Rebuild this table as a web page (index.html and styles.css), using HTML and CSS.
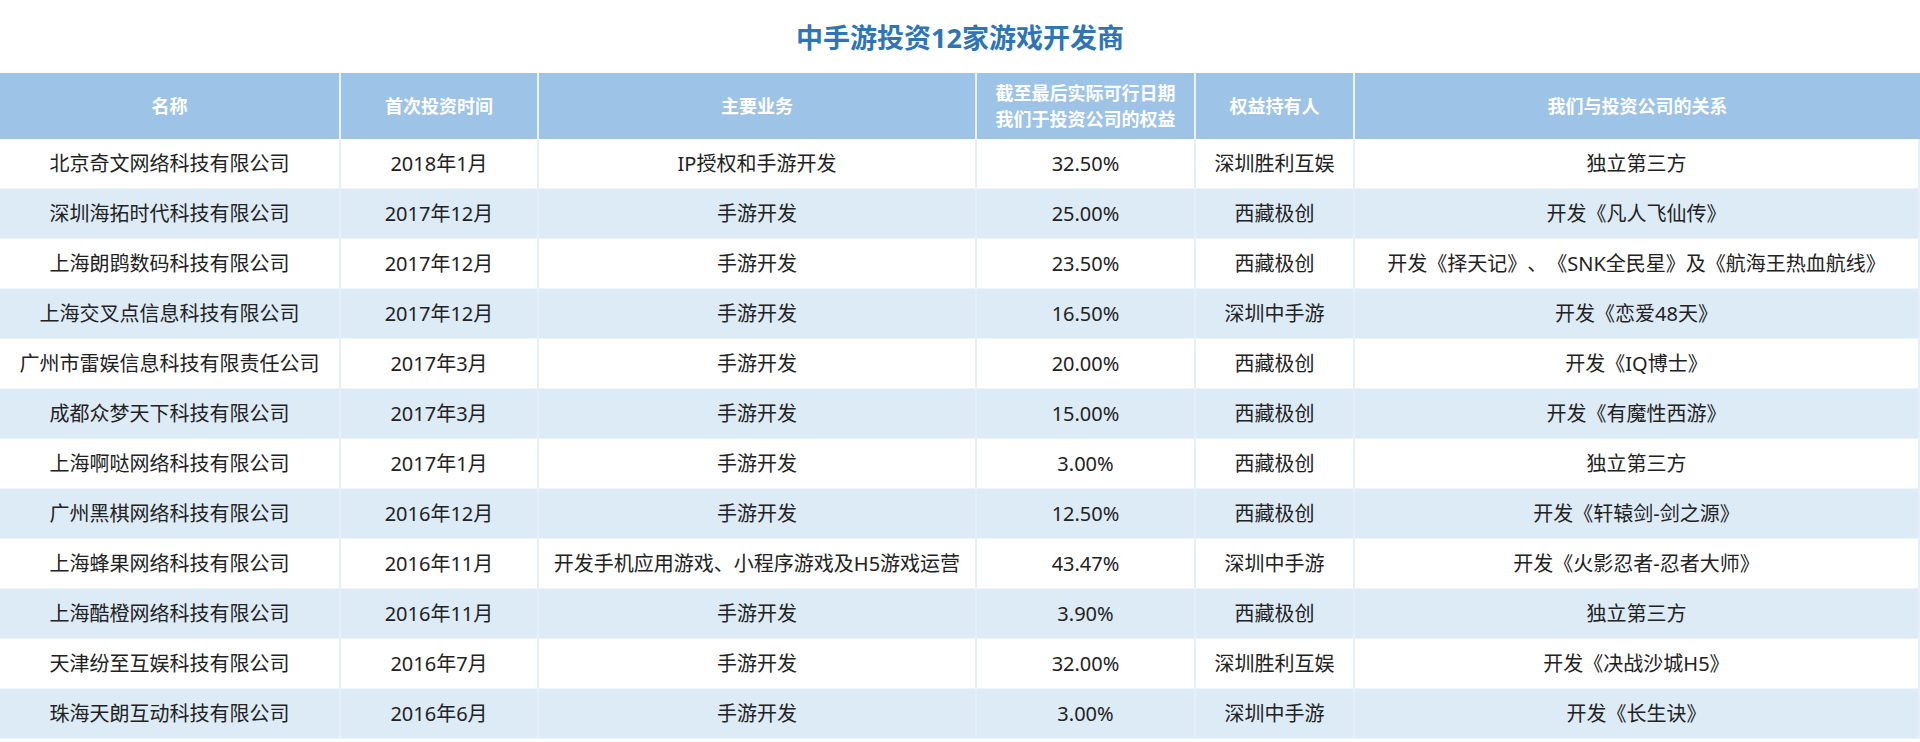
FILE: index.html
```html
<!DOCTYPE html>
<html lang="zh-CN">
<head>
<meta charset="utf-8">
<title>中手游投资12家游戏开发商</title>
<link rel="stylesheet" href="styles.css">
</head>
<body>
<div class="page">
  <h1 class="title">中手游投资12家游戏开发商</h1>
  <table class="grid">
    <colgroup>
      <col class="c-name">
      <col class="c-date">
      <col class="c-biz">
      <col class="c-pct">
      <col class="c-holder">
      <col class="c-rel">
    </colgroup>
    <thead>
      <tr>
        <th>名称</th>
        <th>首次投资时间</th>
        <th>主要业务</th>
        <th>截至最后实际可行日期<br>我们于投资公司的权益</th>
        <th>权益持有人</th>
        <th>我们与投资公司的关系</th>
      </tr>
    </thead>
    <tbody>
      <tr><td>北京奇文网络科技有限公司</td><td>2018年1月</td><td>IP授权和手游开发</td><td>32.50%</td><td>深圳胜利互娱</td><td>独立第三方</td></tr>
      <tr><td>深圳海拓时代科技有限公司</td><td>2017年12月</td><td>手游开发</td><td>25.00%</td><td>西藏极创</td><td>开发《凡人飞仙传》</td></tr>
      <tr><td>上海朗鹍数码科技有限公司</td><td>2017年12月</td><td>手游开发</td><td>23.50%</td><td>西藏极创</td><td>开发《择天记》、《SNK全民星》及《航海王热血航线》</td></tr>
      <tr><td>上海交叉点信息科技有限公司</td><td>2017年12月</td><td>手游开发</td><td>16.50%</td><td>深圳中手游</td><td>开发《恋爱48天》</td></tr>
      <tr><td>广州市雷娱信息科技有限责任公司</td><td>2017年3月</td><td>手游开发</td><td>20.00%</td><td>西藏极创</td><td>开发《IQ博士》</td></tr>
      <tr><td>成都众梦天下科技有限公司</td><td>2017年3月</td><td>手游开发</td><td>15.00%</td><td>西藏极创</td><td>开发《有魔性西游》</td></tr>
      <tr><td>上海啊哒网络科技有限公司</td><td>2017年1月</td><td>手游开发</td><td>3.00%</td><td>西藏极创</td><td>独立第三方</td></tr>
      <tr><td>广州黑棋网络科技有限公司</td><td>2016年12月</td><td>手游开发</td><td>12.50%</td><td>西藏极创</td><td>开发《轩辕剑-剑之源》</td></tr>
      <tr><td>上海蜂果网络科技有限公司</td><td>2016年11月</td><td>开发手机应用游戏、小程序游戏及H5游戏运营</td><td>43.47%</td><td>深圳中手游</td><td>开发《火影忍者-忍者大师》</td></tr>
      <tr><td>上海酷橙网络科技有限公司</td><td>2016年11月</td><td>手游开发</td><td>3.90%</td><td>西藏极创</td><td>独立第三方</td></tr>
      <tr><td>天津纷至互娱科技有限公司</td><td>2016年7月</td><td>手游开发</td><td>32.00%</td><td>深圳胜利互娱</td><td>开发《决战沙城H5》</td></tr>
      <tr><td>珠海天朗互动科技有限公司</td><td>2016年6月</td><td>手游开发</td><td>3.00%</td><td>深圳中手游</td><td>开发《长生诀》</td></tr>
    </tbody>
  </table>
</div>
</body>
</html>
```
FILE: styles.css
```css
html, body {
  margin: 0;
  padding: 0;
  background: #ffffff;
  overflow: hidden;
}

.page {
  width: 1920px;
  font-family: "Noto Sans", "Noto Sans CJK SC", sans-serif;
  color: #222222;
  text-spacing-trim: space-all;
}

.title {
  margin: 0;
  height: 73px;
  display: flex;
  align-items: center;
  justify-content: center;
  font-size: 27px;
  font-weight: 700;
  color: #2e75b6;
  letter-spacing: 0;
}

.grid {
  width: 1920px;
  table-layout: fixed;
  border-collapse: separate;
  border-spacing: 0;
}

.c-name { width: 341px; }
.c-date { width: 198px; }
.c-biz { width: 438px; }
.c-pct { width: 219px; }
.c-holder { width: 159px; }
.c-rel { width: 565px; }

.grid th,
.grid td {
  box-sizing: border-box;
  padding: 0;
  text-align: center;
  vertical-align: middle;
  white-space: nowrap;
  border-right: 2px solid #e6eff9;
  border-bottom: 1px solid #eef4fb;
}

.grid th {
  height: 66px;
  background: #9dc3e6;
  color: #ffffff;
  font-size: 18px;
  font-weight: 700;
  line-height: 26px;
  border-right-color: #eaf2fa;
  border-bottom: none;
}

.grid th:last-child {
  border-right: none;
}

.grid td {
  height: 50px;
  font-size: 20px;
  line-height: 26px;
  background: #ffffff;
}

.grid tbody tr:nth-child(even) td {
  background: #ddebf7;
}
```
